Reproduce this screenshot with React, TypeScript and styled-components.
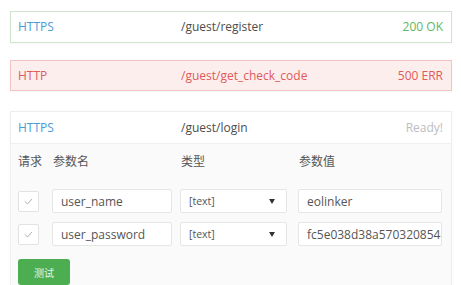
import React from "react";
import styled, { createGlobalStyle, css } from "styled-components";

const GlobalStyle = createGlobalStyle`
  html, body {
    margin: 0;
    padding: 0;
    background: #fff;
  }
  body {
    font-family: "Open Sans", "Noto Sans CJK SC", sans-serif;
    font-size: 12px;
    color: #555;
  }
`;

type Tone = "ok" | "err";

const Page = styled.div`
  width: 461px;
  height: 285px;
  box-sizing: border-box;
  padding: 11px 9px 0 10px;
  display: flex;
  flex-direction: column;
  gap: 17px;
  overflow: hidden;
`;

const StatusCard = styled.div<{ $tone: Tone }>`
  height: 34px;
  box-sizing: border-box;
  padding: 0 8px 0 7px;
  display: grid;
  grid-template-columns: 163px 1fr auto;
  align-items: center;
  border: 1px solid;
  box-shadow: 0 1px 2px rgba(0, 0, 0, 0.04);
  ${({ $tone }) =>
    $tone === "ok"
      ? css`
          background: #fff;
          border-color: #cfe5cf;
        `
      : css`
          background: #fdeeee;
          border-color: #f4c4c4;
        `}
`;

const Method = styled.span<{ $tone: Tone }>`
  color: ${({ $tone }) => ($tone === "err" ? "#e15a5a" : "#4a9bd6")};
`;

const Path = styled.span<{ $tone: Tone }>`
  color: ${({ $tone }) => ($tone === "err" ? "#e15a5a" : "#4d4d4d")};
`;

const Status = styled.span<{ $color: string }>`
  color: ${({ $color }) => $color};
`;

const TestCard = styled.div`
  margin-top: 3px;
  border: 1px solid #eeeeee;
  border-bottom: none;
  box-shadow: 0 1px 3px rgba(0, 0, 0, 0.04);
  flex: 1;
  display: flex;
  flex-direction: column;
  background: #fafafa;
`;

const TestHeader = styled.div`
  height: 32px;
  box-sizing: border-box;
  padding: 0 8px 0 7px;
  display: grid;
  grid-template-columns: 163px 1fr auto;
  align-items: center;
  background: #fff;
  border-bottom: 1px solid #f0f0f0;
`;

const Body = styled.div`
  padding: 5px 9px 0 7px;
  display: flex;
  flex-direction: column;
`;

const LabelRow = styled.div`
  height: 24px;
  margin-bottom: 16px;
  display: grid;
  grid-template-columns: 35px 128px 118px 1fr;
  align-items: center;
`;

const Label = styled.span`
  color: #555;
  font-size: 12px;
  white-space: nowrap;
`;

const Rows = styled.div`
  display: flex;
  flex-direction: column;
  gap: 9px;
`;

const ParamRow = styled.div`
  display: flex;
  align-items: center;
  height: 24px;
`;

const Check = styled.div`
  width: 21px;
  height: 21px;
  box-sizing: border-box;
  border: 1px solid #e2e2e2;
  border-radius: 2px;
  background: #fff;
  display: flex;
  align-items: center;
  justify-content: center;
  margin-right: 13px;
`;

const Field = styled.div<{ $width: number; $offset?: number; $small?: boolean }>`
  width: ${({ $width }) => $width}px;
  margin-left: ${({ $offset = 0 }) => $offset}px;
  height: 24px;
  box-sizing: border-box;
  border: 1px solid #e6e6e6;
  border-radius: 2px;
  background: #fff;
  padding: 0 8px;
  display: flex;
  align-items: center;
  justify-content: space-between;
  color: #555;
  font-size: ${({ $small }) => ($small ? "10.5px" : "12px")};
  white-space: nowrap;
  overflow: hidden;
`;

const Caret = styled.span`
  width: 0;
  height: 0;
  border-left: 3px solid transparent;
  border-right: 3px solid transparent;
  border-top: 5px solid #333;
  margin-right: 3px;
`;

const TestButton = styled.button`
  margin-top: 13px;
  width: 52px;
  height: 26px;
  border: none;
  border-radius: 3px;
  background: #4cae50;
  color: #eaf6ea;
  font-family: "Noto Sans CJK SC", sans-serif;
  font-size: 10px;
  padding: 0;
`;

const CheckMark = () => (
  <svg width="9" height="7" viewBox="0 0 9 7">
    <path d="M1 3.5 L3.5 6 L8 1" fill="none" stroke="#b0b0b0" strokeWidth="1" />
  </svg>
);

const params = [
  { name: "user_name", type: "[text]", value: "eolinker" },
  { name: "user_password", type: "[text]", value: "fc5e038d38a5703208546" },
];

export default function App() {
  return (
    <>
      <GlobalStyle />
      <Page>
        <StatusCard $tone="ok">
          <Method $tone="ok">HTTPS</Method>
          <Path $tone="ok">/guest/register</Path>
          <Status $color="#5db85f">200 OK</Status>
        </StatusCard>
        <StatusCard $tone="err">
          <Method $tone="err">HTTP</Method>
          <Path $tone="err">/guest/get_check_code</Path>
          <Status $color="#e15a5a">500 ERR</Status>
        </StatusCard>
        <TestCard>
          <TestHeader>
            <Method $tone="ok">HTTPS</Method>
            <Path $tone="ok">/guest/login</Path>
            <Status $color="#bdbdbd">Ready!</Status>
          </TestHeader>
          <Body>
            <LabelRow>
              <Label>请求</Label>
              <Label>参数名</Label>
              <Label>类型</Label>
              <Label>参数值</Label>
            </LabelRow>
            <Rows>
              {params.map((p) => (
                <ParamRow key={p.name}>
                  <Check>
                    <CheckMark />
                  </Check>
                  <Field $width={120}>{p.name}</Field>
                  <Field $width={107} $offset={8} $small>
                    {p.type}
                    <Caret />
                  </Field>
                  <Field $width={144} $offset={11}>
                    {p.value}
                  </Field>
                </ParamRow>
              ))}
            </Rows>
            <TestButton>测试</TestButton>
          </Body>
        </TestCard>
      </Page>
    </>
  );
}
